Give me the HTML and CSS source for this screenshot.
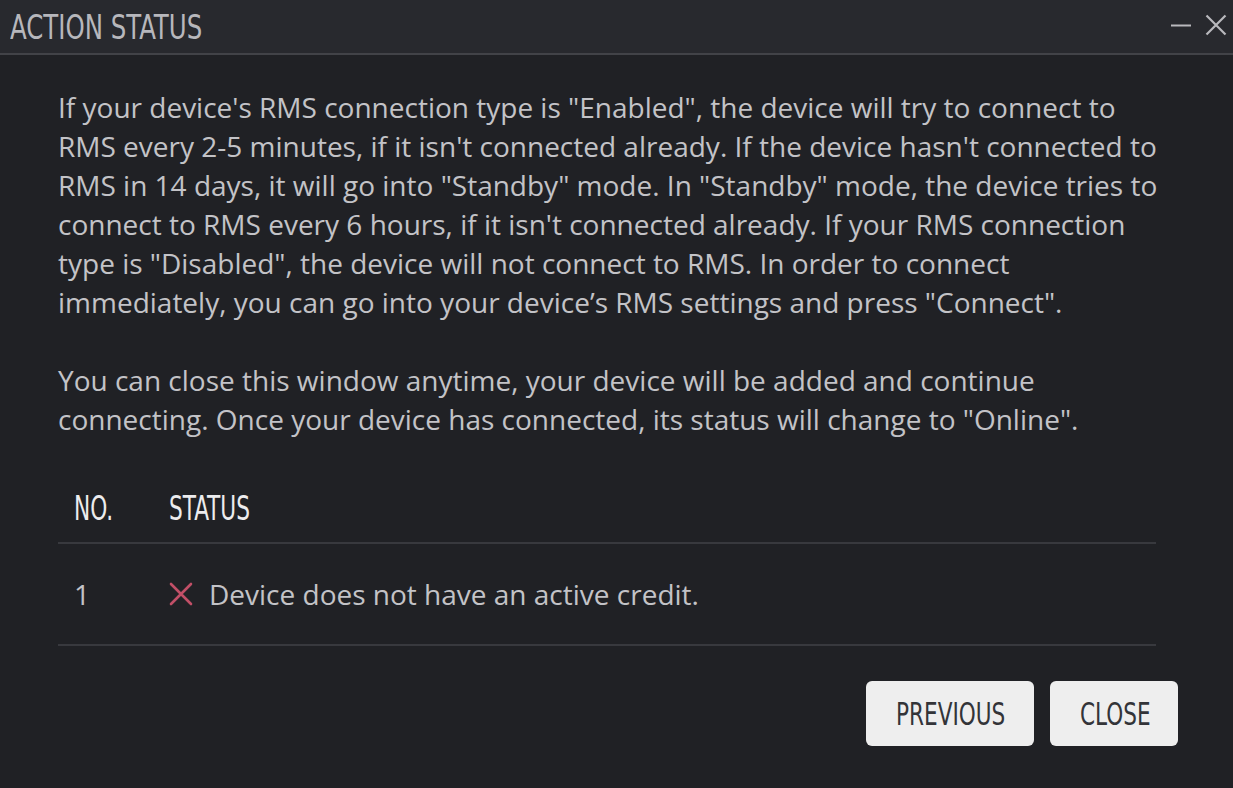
FILE: index.html
```html
<!DOCTYPE html>
<html>
<head>
<meta charset="utf-8">
<link rel="stylesheet" href="styles.css">
</head>
<body>
<div class="dialog">
  <div class="header">
    <div class="title"><span class="narrow">ACTION STATUS</span></div>
    <div class="controls">
      <svg class="ctl" width="22" height="22" viewBox="0 0 22 22"><path d="M1 11.5 H21" stroke="#b9b9bd" stroke-width="2"/></svg>
      <svg class="ctl" width="22" height="22" viewBox="0 0 22 22"><path d="M1.5 1.5 L20.5 20.5 M20.5 1.5 L1.5 20.5" stroke="#b9b9bd" stroke-width="2.2"/></svg>
    </div>
  </div>
  <div class="content">
    <p class="text">If your device's RMS connection type is "Enabled", the device will try to connect to RMS every 2-5 minutes, if it isn't connected already. If the device hasn't connected to RMS in 14 days, it will go into "Standby" mode. In "Standby" mode, the device tries to connect to RMS every 6 hours, if it isn't connected already. If your RMS connection type is "Disabled", the device will not connect to RMS. In order to connect immediately, you can go into your device’s RMS settings and press "Connect".</p>
    <p class="text">You can close this window anytime, your device will be added and continue connecting. Once your device has connected, its status will change to "Online".</p>
    <table class="status-table">
      <thead>
        <tr><th class="col-no"><span class="narrow">NO.</span></th><th><span class="narrow">STATUS</span></th></tr>
      </thead>
      <tbody>
        <tr>
          <td class="col-no">1</td>
          <td><span class="status"><svg class="xicon" width="24" height="24" viewBox="0 0 24 24"><path d="M2 2 L22 22 M22 2 L2 22" stroke="#c14f67" stroke-width="2.6" stroke-linecap="round"/></svg>Device does not have an active credit.</span></td>
        </tr>
      </tbody>
    </table>
    <div class="actions">
      <button class="btn btn-prev"><span class="narrow">PREVIOUS</span></button>
      <button class="btn btn-close"><span class="narrow">CLOSE</span></button>
    </div>
  </div>
</div>
</body>
</html>
```
FILE: styles.css
```css
html, body {
  margin: 0;
  padding: 0;
  background: #202125;
}
body {
  width: 1233px;
  height: 788px;
  overflow: hidden;
}
.dialog {
  background: #202125;
  height: 788px;
}
.narrow {
  display: inline-block;
  transform-origin: left center;
}
.header {
  background: #28292e;
  border-bottom: 2px solid #424348;
  display: flex;
  align-items: center;
  justify-content: space-between;
  padding: 0 6px 0 10px;
  box-sizing: border-box;
  height: 55px;
}
.title {
  font-family: "DejaVu Sans Condensed", sans-serif;
  font-size: 34px;
  color: #b7b7bc;
}
.title .narrow { transform: scaleX(0.8); }
.controls {
  display: flex;
  align-items: center;
  gap: 13px;
  margin-top: -4px;
}
.ctl { display: block; }
.content {
  padding: 33px 55px 0 58px;
}
.text {
  font-family: "Open Sans", sans-serif;
  font-size: 28px;
  line-height: 39px;
  color: #c3c3c7;
  margin: 0 0 39px 0;
  width: 1106px;
}
.status-table {
  width: 1098px;
  border-collapse: collapse;
}
.status-table th {
  font-family: "DejaVu Sans Condensed", sans-serif;
  font-weight: normal;
  font-size: 33px;
  color: #ececee;
  text-align: left;
  height: 60px;
  padding: 0 0 4px 16px;
  border-bottom: 2px solid #38393e;
  vertical-align: middle;
}
.status-table th .narrow { transform: scaleX(0.73); }
.status-table th.col-no { width: 79px; }
.status-table td {
  font-family: "Open Sans", sans-serif;
  font-size: 28px;
  color: #c3c3c7;
  height: 100px;
  padding: 0 0 0 16px;
  border-bottom: 2px solid #38393e;
  vertical-align: middle;
}
.status {
  display: flex;
  align-items: center;
  gap: 16px;
}
.xicon { display: block; flex: none; }
.actions {
  display: flex;
  justify-content: flex-end;
  gap: 16px;
  margin-top: 35px;
}
.btn {
  font-family: "DejaVu Sans Condensed", sans-serif;
  font-size: 32px;
  color: #333438;
  background: #eeeeee;
  border: none;
  border-radius: 6px;
  height: 65px;
  padding: 0;
  display: flex;
  align-items: center;
  justify-content: flex-start;
}
.btn .narrow { transform: scaleX(0.75); }
.btn-prev { width: 168px; padding-left: 30px; }
.btn-close { width: 128px; padding-left: 30px; }
```
